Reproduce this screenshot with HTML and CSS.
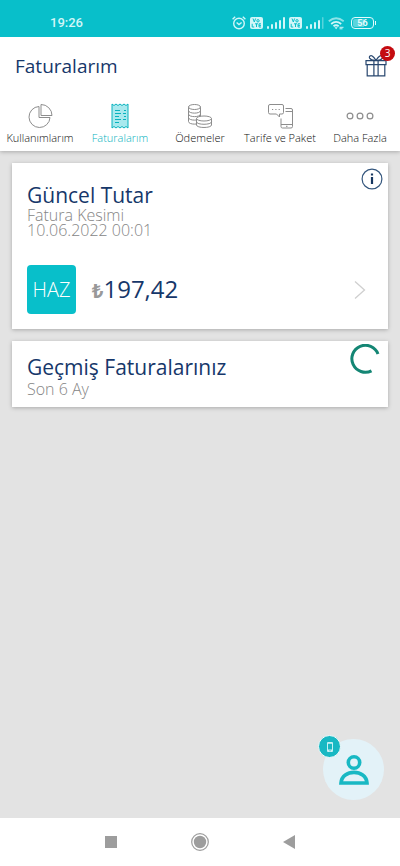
FILE: index.html
```html
<!DOCTYPE html>
<html lang="tr">
<head>
<meta charset="utf-8">
<meta name="viewport" content="width=device-width, initial-scale=1">
<title>Faturalarım</title>
<link rel="stylesheet" href="styles.css">
</head>
<body>
<div class="app">
  <div class="status">
    <span class="clock">19:26</span>
    <div class="status-icons">
      <svg width="14" height="14" viewBox="0 0 14 14" fill="none" stroke="currentColor" stroke-width="1.4"><circle cx="7" cy="7.5" r="5.3"/><path d="M4.6 6.5 7 8.6l2.6-2.1M.6 3.2 3.2.8M13.4 3.2 10.8.8"/></svg>
      <svg width="13" height="12" viewBox="0 0 13 12"><rect width="13" height="12" rx="2" fill="currentColor"/><path d="M3 1.5 4.3 5l1.3-3.5M2.2 6.8V10h2M5 6.8h3M6.5 6.8V10M11 6.8H9V10h2M9 8.4h2" fill="none" stroke="#08bfca"/><circle cx="8" cy="3.8" r="1.2" fill="none" stroke="#08bfca"/></svg>
      <svg width="18" height="12" viewBox="0 0 18 12" fill="currentColor"><rect y="9" width="2" height="3" rx="1"/><rect x="4" y="7" width="2" height="5" rx="1"/><rect x="8" y="5" width="2" height="7" rx="1"/><rect x="12" y="3" width="2" height="9" rx="1"/><rect x="16" width="2" height="12" rx="1"/></svg>
      <svg width="13" height="12" viewBox="0 0 13 12"><rect width="13" height="12" rx="2" fill="currentColor"/><path d="M3 1.5 4.3 5l1.3-3.5M2.2 6.8V10h2M5 6.8h3M6.5 6.8V10M11 6.8H9V10h2M9 8.4h2" fill="none" stroke="#08bfca"/><circle cx="8" cy="3.8" r="1.2" fill="none" stroke="#08bfca"/></svg>
      <svg width="18" height="12" viewBox="0 0 18 12" fill="currentColor"><rect y="9" width="2" height="3" rx="1"/><rect x="4" y="7" width="2" height="5" rx="1"/><rect x="8" y="5" width="2" height="7" rx="1"/><rect x="12" y="3" width="2" height="9" rx="1"/><rect x="16" width="1.5" height="12" rx=".7" opacity=".4"/></svg>
      <svg width="17" height="13" viewBox="0 0 17 13" fill="none" stroke="currentColor" stroke-width="1.8"><path d="M.8 4.300Q8 -1.800 15.700 4.300" opacity=".65"/><path d="M3.200 7Q8 2.800 13.200 7M5.500 9.300Q8 7.200 10.700 9.300"/><path d="M6.500 10.300h3.200L8.100 12.300z" fill="currentColor" stroke="none"/><path d="M11.500 10.300h4M11.500 11.800h3" stroke-width="1"/></svg>
      <span class="battery">56</span>
    </div>
  </div>

  <header class="header">
    <h1>Faturalarım</h1>
    <button class="gift" aria-label="Hediyeler">
      <svg width="22" height="22" viewBox="0 0 22 22" fill="none" stroke="#28476f" stroke-width="1.2"><path d="M1 5.600h20v4H1zM2.200 9.600h17.600v11.300H2.200zM8.900 5.600v15.300M13.100 5.600v15.300M11 5.300C8.500 5.500 5.700 4.800 4.600 3.100 3.800 1.200 5.600.1 7.200 1c1.900 1.200 2.800 2.800 3.800 4.300 1-1.500 1.900-3.100 3.800-4.300 1.600-.9 3.400.2 2.600 2.100-1.100 1.700-3.900 2.400-6.400 2.200z"/></svg>
      <span class="count">3</span>
    </button>
  </header>

  <nav class="tabs">
    <a href="#">
      <svg width="26" height="26" viewBox="0 0 26 26" fill="none" stroke="currentColor"><path d="M12 3.500A10.500 10.500 0 1 0 23 14.500H12z"/><path d="M14 1.500v11h11A11 11 0 0 0 14 1.500z"/></svg>
      <span>Kullanımlarım</span>
    </a>
    <a href="#" class="active" aria-current="page">
      <svg width="26" height="26" viewBox="0 0 26 26" fill="#a9e9ee" stroke="currentColor"><path d="M5 1l2 1.500L9 1l2 1.500L13 1l2 1.500L17 1l2 1.500L21 1v24l-2-1.500-2 1.500-2-1.500-2 1.500-2-1.500L9 25l-2-1.500L5 25z"/><path d="M8 7.500h5M8 10.500h6M8 13.500h4M8 16.500h6M8 19.500h4M17 7.500h2M16 10.500h3M17 13.500h2M16 16.500h3"/></svg>
      <span>Faturalarım</span>
    </a>
    <a href="#">
      <svg width="26" height="26" viewBox="0 0 26 26" fill="#fff" stroke="currentColor"><path d="M1.500 4v14.500c0 3.500 12 3.500 12 0V4z"/><ellipse cx="7.500" cy="4" rx="6" ry="2.500"/><path d="M1.500 7.500c0 3.500 12 3.500 12 0M1.500 11c0 3.500 12 3.500 12 0M1.500 14.500c0 3.500 12 3.500 12 0" fill="none"/><path d="M9.500 15.500v6.500c0 3.300 15 3.300 15 0v-6.500z"/><ellipse cx="17" cy="15.500" rx="7.500" ry="2.500"/><path d="M9.500 18.800c0 3.300 15 3.300 15 0" fill="none"/></svg>
      <span>Ödemeler</span>
    </a>
    <a href="#">
      <svg width="26" height="26" viewBox="0 0 26 26" fill="none" stroke="currentColor"><path d="M3 1.500h12q1.500 0 1.500 1.500v6.500q0 1.500-1.500 1.500h-2.500v3L9.500 11H3q-1.500 0-1.500-1.500V3q0-1.500 1.500-1.500zM18.500 5.500H24q1.500 0 1.500 1.500v16.500q0 1.500-1.500 1.500h-8.500q-1.500 0-1.500-1.500V15.500M18.500 8.500h7M14 21.500h11.500"/><path d="M5 6.500h1.200M8.300 6.500h1.200M11.600 6.500h1.200M19 23.300h1.500"/></svg>
      <span>Tarife ve Paket</span>
    </a>
    <a href="#">
      <svg width="28" height="26" viewBox="0 0 28 26" fill="none" stroke="currentColor" stroke-width="1.2"><circle cx="4" cy="13" r="2.900"/><circle cx="14" cy="13" r="2.900"/><circle cx="24" cy="13" r="2.900"/></svg>
      <span>Daha Fazla</span>
    </a>
  </nav>

  <main class="content">
    <section class="card">
      <button class="info" aria-label="Bilgi"><svg width="22" height="22" viewBox="0 0 22 22"><circle cx="11" cy="11" r="9.900" fill="none" stroke="#34567d" stroke-width="1.2"/><path d="M9.900 5.500h2.200v2H9.900zM9.900 9h2.200v7H9.900z" fill="#16365f"/></svg></button>
      <h2>Güncel Tutar</h2>
      <p>Fatura Kesimi<br>10.06.2022 00:01</p>
      <a href="#" class="bill">
        <span class="plan">HAZ</span>
        <span class="amount"><span class="currency">₺</span>197,42</span>
        <svg width="12" height="20" viewBox="0 0 12 20" fill="none" stroke="#cfcfcf" stroke-width="1.3"><path d="M1 1.500 10.500 10 1 18.500"/></svg>
      </a>
    </section>
    <section class="card past">
      <h2>Geçmiş Faturalarınız</h2>
      <p>Son 6 Ay</p>
      <svg class="spinner" width="30" height="30" viewBox="0 0 30 30" fill="none" stroke="#148674" stroke-width="3"><path d="M28 10A13.500 13.500 0 1 0 21.500 26.800"/></svg>
    </section>
    <button class="assistant" aria-label="Hesabım">
      <svg width="32" height="32" viewBox="0 0 32 32" fill="none" stroke="#18b8c3"><circle cx="16" cy="8.500" r="5.700" stroke-width="3.600"/><path d="M3 29C4 14.800 28 14.800 29 29z" stroke-width="3.600"/></svg>
      <span class="device"><svg width="6" height="10" viewBox="0 0 6 10"><rect width="6" height="10" rx="1" fill="#c8f1f4"/><path d="M1 1.800h4v5.700H1z" fill="#18b8c3"/><path d="M2.500 8.300h1v1h-1z" fill="#18b8c3"/></svg></span>
    </button>
  </main>

  <nav class="system">
    <button aria-label="Son uygulamalar"><svg width="18" height="18" viewBox="0 0 18 18"><path d="M3 3h12v12H3z" fill="#9d9d9d"/></svg></button>
    <button aria-label="Ana ekran"><svg width="18" height="18" viewBox="0 0 18 18"><circle cx="9" cy="9" r="8.300" fill="none" stroke="#9d9d9d" stroke-width="1.2"/><circle cx="9" cy="9" r="6.200" fill="#9d9d9d"/></svg></button>
    <button aria-label="Geri"><svg width="18" height="18" viewBox="0 0 18 18"><path d="M15 2v14L3 9z" fill="#9d9d9d"/></svg></button>
  </nav>
</div>
</body>
</html>
```
FILE: styles.css
```css
* { box-sizing: border-box; }
body { margin: 0; font-family: "Open Sans", "Noto Sans", sans-serif; font-weight: 300; color: #16376a; }
h1, h2, p { margin: 0; }
h1, h2 { font-weight: 400; }
button { border: 0; padding: 0; background: none; font: inherit; cursor: pointer; }
a { color: inherit; text-decoration: none; }
svg { display: block; flex: none; }

.app { min-height: 100vh; display: flex; flex-direction: column; background: #fff; }

.status { height: 37px; padding: 9px 26px 0 50px; display: flex; align-items: center; justify-content: space-between; background: #08bfca; color: #d2f6f8; }
.clock { font: 500 13px/16px Roboto, sans-serif; }
.status-icons { display: flex; align-items: center; gap: 4px; }
.battery { position: relative; width: 23px; height: 12px; margin-left: 2px; border: 1px solid; border-radius: 4px; padding: 1px; text-align: center; font: 700 9px/8px Roboto, sans-serif; background: linear-gradient(90deg, #5bd5dc 56%, transparent 56%) content-box; color: #e6fbfc; }
.battery::after { content: ""; position: absolute; right: -3px; top: 3px; width: 1px; height: 4px; background: currentColor; }

.header { position: relative; z-index: 2; height: 58px; padding: 0 13px 0 15px; display: flex; align-items: center; justify-content: space-between; background: #fff; }
.header h1 { font-size: 19px; line-height: 24px; }
.gift { position: relative; }
.count { position: absolute; left: 15px; top: -9px; width: 15px; height: 15px; border-radius: 50%; background: #c40b10; color: #fff; font-size: 10px; font-weight: 400; line-height: 15px; text-align: center; }

.tabs { position: relative; z-index: 1; display: grid; grid-template-columns: repeat(5, 1fr); padding: 8px 0 5px; background: #fff; box-shadow: 0 1px 4px rgba(0, 0, 0, .25); color: #8d8d8d; }
.tabs a { display: flex; flex-direction: column; align-items: center; gap: 1px; }
.tabs span { font-size: 11px; line-height: 16px; color: #111; white-space: nowrap; }
.tabs .active, .tabs .active span { color: #08b2be; }

.content { position: relative; flex: 1; padding: 12px; display: flex; flex-direction: column; gap: 12px; background: #e3e3e3; }
.card { position: relative; padding: 19px 15px 15px; background: #fff; box-shadow: 0 1px 4px rgba(0, 0, 0, .25); }
.card h2 { font-size: 21px; line-height: 26px; }
.card p { font-size: 16px; line-height: 15px; color: #858585; }
.info { position: absolute; right: 5px; top: 5px; }
.bill { display: flex; align-items: center; margin-top: 27px; padding-right: 7px; }
.plan { width: 49px; height: 49px; border-radius: 4px; background: #08bfca; color: #fff; font-size: 20px; line-height: 49px; text-align: center; }
.amount { flex: 1; margin-left: 16px; font-size: 24px; line-height: 36px; font-weight: 400; }
.currency { font-size: 20px; font-weight: 700; color: #999; }
.past { padding: 13px 15px 9px; }
.past p { line-height: 18px; }
.spinner { position: absolute; right: 8px; top: 3px; }

.assistant { position: absolute; right: 16px; bottom: 18px; width: 61px; height: 61px; display: grid; place-items: center; border-radius: 50%; background: #e3f2f8; }
.device { position: absolute; left: -5px; top: -4px; width: 23px; height: 23px; display: grid; place-items: center; border: 1px solid #f3fbfc; border-radius: 50%; background: #18b8c3; }

.system { height: 48px; padding: 0 67px; display: grid; grid-template-columns: repeat(3, 1fr); place-items: center; background: #fff; }
```
